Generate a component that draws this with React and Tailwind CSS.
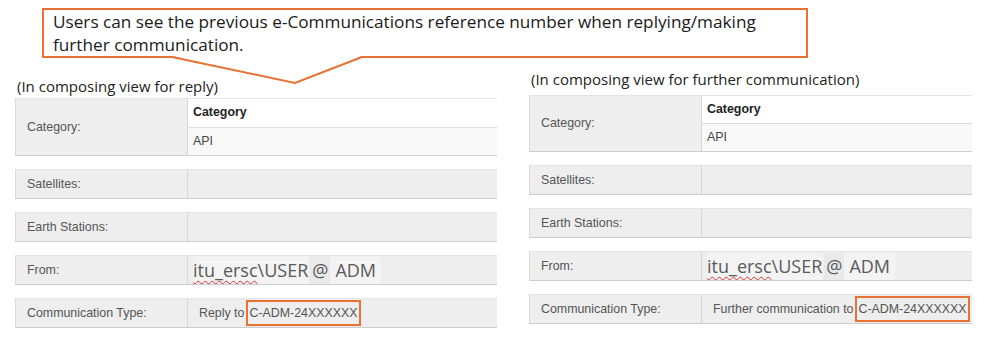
import React from 'react';

const ORANGE = 'border-[#e97132]';

function Row({ label, children, className = '' }) {
  return (
    <div className={`flex h-[30px] border-t border-t-[#e4e4e4] border-b border-b-[#cdcdcd] border-l border-l-[#dadada] bg-[#eeeeee] ${className}`}>
      <div className="w-[172px] shrink-0 flex items-center pl-[11px] border-r border-r-[#d6d6d6] text-[12.4px] text-[#555]">
        {label}
      </div>
      <div className="flex-1 flex items-center min-w-0">{children}</div>
    </div>
  );
}

function CategoryRow({ h }) {
  return (
    <div className={`flex ${h} border-t border-t-[#e4e4e4] border-b border-b-[#cdcdcd] border-l border-l-[#dadada] bg-[#eeeeee]`}>
      <div className="w-[172px] shrink-0 flex items-center pl-[11px] border-r border-r-[#d6d6d6] text-[12.4px] text-[#555]">
        Category:
      </div>
      <div className="flex-1 flex flex-col">
        <div className="flex-1 flex items-center pl-[5px] bg-white text-[12.4px] font-bold text-[#222]">Category</div>
        <div className="flex-1 flex items-center pl-[5px] bg-[#f8f8f8] border-t border-t-[#dedede] text-[12.4px] text-[#444]">API</div>
      </div>
    </div>
  );
}

function FromValue() {
  return (
    <div className="flex items-center h-full pl-[5px] text-[18px] text-[#5a5a5a] font-['Open_Sans',sans-serif]">
      <span className="bg-[#f3f3f3]">
        <span className="underline decoration-wavy decoration-[#e03030] decoration-[1px] underline-offset-[3px]">itu_ersc</span>\USER
      </span>
      <span className="bg-[#e9e9e9] px-[2px] ml-[2px]">@</span>
      <span className="bg-[#f3f3f3] px-[5px]">ADM</span>
    </div>
  );
}

function Panel({ title, prefix, titleH, catH }) {
  return (
    <div className="flex flex-col">
      <div className={`${titleH} pl-[2px] text-[15px] text-[#222] font-['Open_Sans',sans-serif] leading-[20px]`}>{title}</div>
      <CategoryRow h={catH} />
      <Row label="Satellites:" className="mt-[13px]" />
      <Row label="Earth Stations:" className="mt-[13px]" />
      <Row label="From:" className="mt-[13px]">
        <FromValue />
      </Row>
      <Row label="Communication Type:" className="mt-[13px]">
        <div className="flex items-center pl-[11px] text-[12.4px] text-[#555] whitespace-nowrap">
          <span>{prefix}</span>
          <span className={`ml-[2px] border-2 ${ORANGE} px-[1px] h-[26px] flex items-center`}>C-ADM-24XXXXXX</span>
        </div>
      </Row>
    </div>
  );
}

export default function App() {
  return (
    <div className="relative w-[997px] h-[337px] bg-white overflow-hidden font-['Liberation_Sans',Arial,sans-serif]">
      <div className={`ml-[42px] mt-[8px] w-[766px] h-[50px] border-2 ${ORANGE} bg-white pl-[9px] pt-0 text-[17.2px] leading-[23px] text-[#1a1a1a] font-['Open_Sans',sans-serif] whitespace-nowrap`}>
        Users can see the previous e-Communications reference number when replying/making
        <br />
        further communication.
      </div>
      <svg className="absolute left-0 top-0" width="997" height="90" viewBox="0 0 997 90">
        <polygon points="172,56 295,83 362,56" fill="#ffffff" />
        <polyline points="172,57 295,83 362,57" fill="none" stroke="#e97132" strokeWidth="2" />
      </svg>
      <div className="flex items-start">
        <div className="ml-[15px] w-[482px] mt-[18px]">
          <Panel title="(In composing view for reply)" prefix="Reply to" titleH="h-[22px]" catH="h-[58px]" />
        </div>
        <div className="ml-[32px] w-[443px] mt-[11px]">
          <Panel title="(In composing view for further communication)" prefix="Further communication to" titleH="h-[26px]" catH="h-[57px]" />
        </div>
      </div>
    </div>
  );
}
